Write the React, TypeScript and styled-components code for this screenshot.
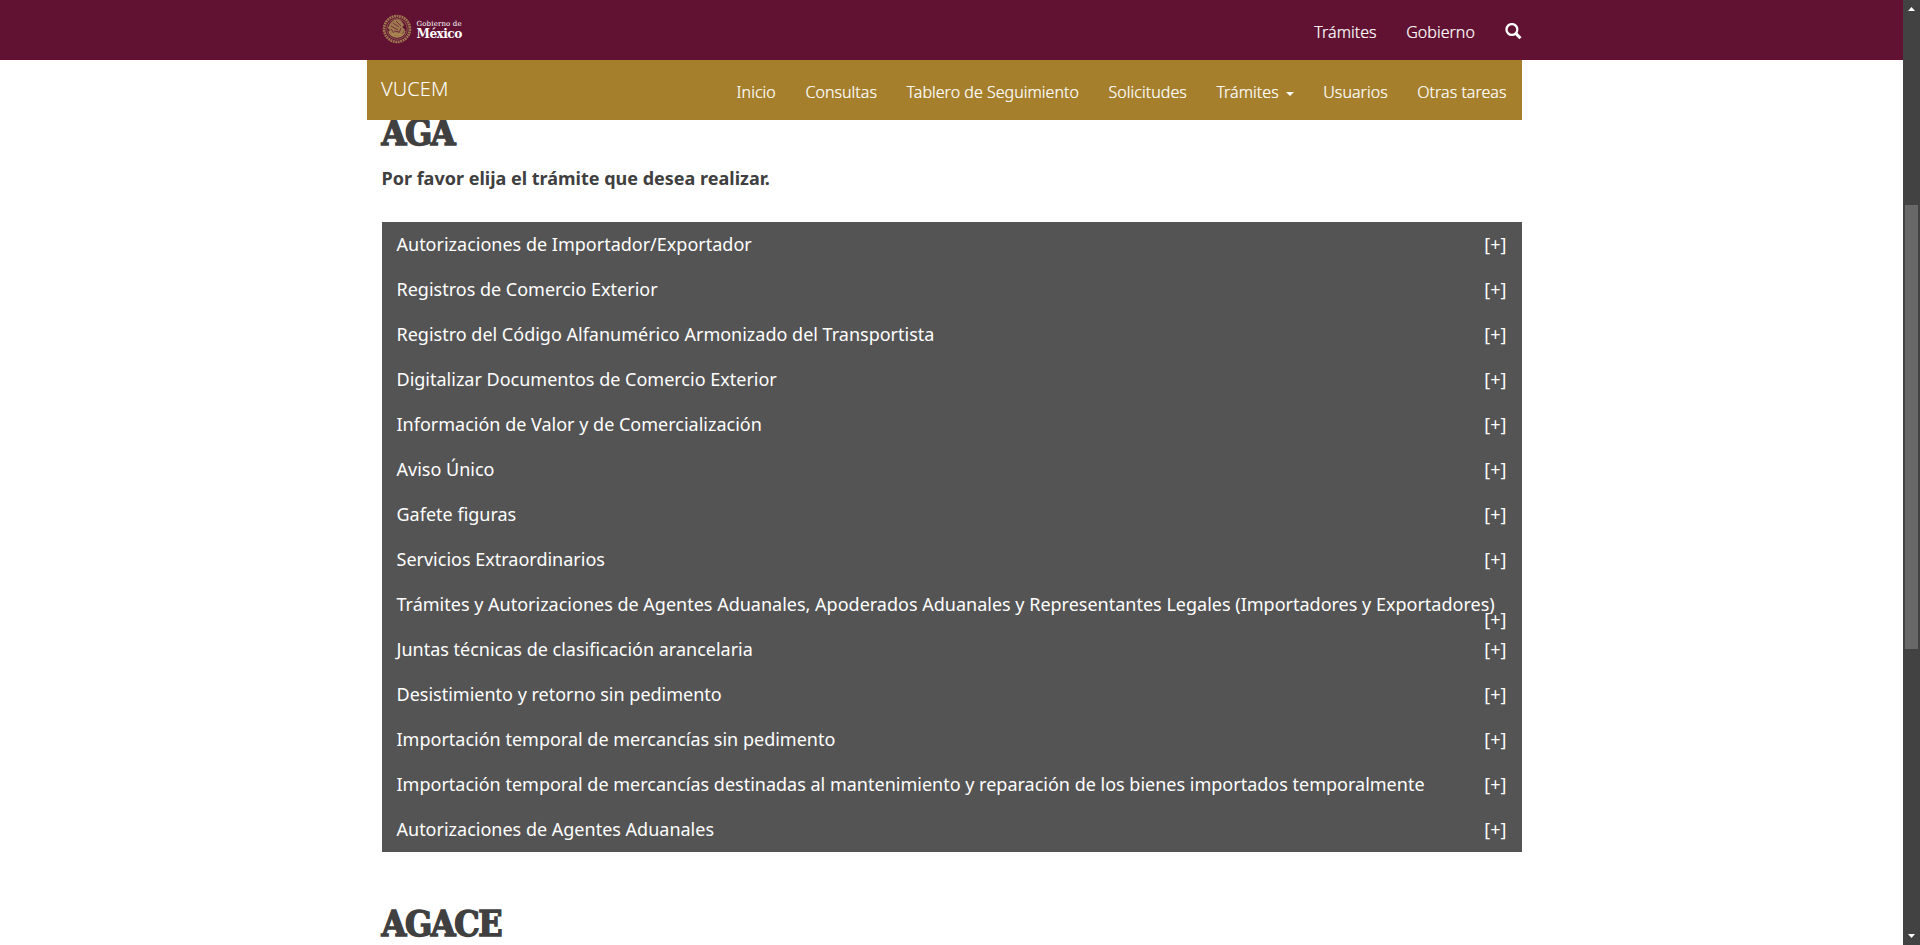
import React from 'react';
import styled, { createGlobalStyle } from 'styled-components';

const GlobalStyle = createGlobalStyle`
  * { box-sizing: border-box; }
  html, body { margin: 0; height: 945px; overflow: hidden; background: #fff; }
  body { font-family: "Noto Sans", "Open Sans", sans-serif; color: #404041; }
  h1, p, ul { margin: 0; padding: 0; }
  ul { list-style: none; }
`;

const Screen = styled.div`
  display: flex;
  width: 1920px;
  height: 945px;
  overflow: hidden;
`;

const Page = styled.div`
  width: 1903px;
  height: 945px;
  overflow: hidden;
`;

const GovBar = styled.header`
  height: 60px;
  background: #611232;
`;

const GovInner = styled.div`
  width: 1140px;
  height: 60px;
  margin: 0 auto;
  display: flex;
  justify-content: space-between;
`;

const Brand = styled.a`
  display: flex;
  align-items: flex-start;
  padding-top: 14px;
`;

const BrandText = styled.span`
  display: flex;
  flex-direction: column;
  margin: 6px 0 0 5px;
  font-family: "DejaVu Serif", serif;
  color: #fff;
`;

const BrandSmall = styled.span`
  font-size: 7px;
  line-height: 8px;
  letter-spacing: 0.15px;
`;

const BrandLarge = styled.span`
  font-family: "DejaVu Serif Condensed", "DejaVu Serif", serif;
  font-size: 13.5px;
  font-weight: 700;
  line-height: 11px;
  letter-spacing: -0.55px;
`;

const Links = styled.nav<{ $top: number }>`
  display: flex;
  align-items: flex-start;
  gap: 29.6px;
  padding-top: ${(p) => p.$top}px;
`;

const NavLink = styled.a`
  display: flex;
  align-items: center;
  color: #fff;
  font-size: 16px;
  font-weight: 300;
  line-height: 22px;
  letter-spacing: 0.03px;
  white-space: nowrap;
  -webkit-text-stroke: 0.2px #fff;
`;

const Caret = styled.span`
  margin: 3px 0 0 7px;
  border-top: 4px solid #fff;
  border-left: 4px solid transparent;
  border-right: 4px solid transparent;
`;

const SearchIcon = styled.svg`
  display: block;
  margin-top: 2px;
`;

const SiteBar = styled.div`
  position: relative;
  z-index: 1;
  display: flex;
  justify-content: space-between;
  width: 1155px;
  height: 60px;
  margin-left: 367px;
  padding: 0 15.5px 0 14px;
  background: #a57f2c;
`;

const SiteName = styled.a`
  padding-top: 15px;
  color: #fff;
  font-size: 20px;
  font-weight: 300;
  line-height: 28px;
  letter-spacing: 0.1px;
`;

const Content = styled.main`
  width: 1140px;
  margin: -18px 0 0 381.5px;
`;

const Heading = styled.h1`
  height: 60px;
  font-family: "DejaVu Serif Condensed", "DejaVu Serif", serif;
  font-size: 35.5px;
  font-weight: 700;
  line-height: 61px;
  letter-spacing: -1.4px;
  color: #404041;
  -webkit-text-stroke: 1.4px #404041;
`;

const Lead = styled.p`
  height: 31px;
  margin-bottom: 29px;
  padding-top: 1px;
  font-size: 18px;
  font-weight: 700;
  line-height: 30px;
`;

const Panel = styled.ul`
  height: 630px;
  margin-bottom: 41px;
  background: #545454;
`;

const Item = styled.li`
  height: 45px;
  padding: 14.5px 15px 0;
  color: #fff;
  font-size: 18px;
  line-height: 15px;
`;

const ItemTitle = styled.span`
  white-space: nowrap;
`;

const Toggle = styled.span`
  float: right;
`;

const Track = styled.div`
  display: flex;
  flex-direction: column;
  align-items: center;
  width: 17px;
  height: 945px;
  padding: 7px 0;
  background: #424242;
`;

const Thumb = styled.div`
  width: 13px;
  height: 444px;
  margin-top: 194px;
  margin-bottom: auto;
  background: #686868;
`;

const procedures = [
  'Autorizaciones de Importador/Exportador',
  'Registros de Comercio Exterior',
  'Registro del Código Alfanumérico Armonizado del Transportista',
  'Digitalizar Documentos de Comercio Exterior',
  'Información de Valor y de Comercialización',
  'Aviso Único',
  'Gafete figuras',
  'Servicios Extraordinarios',
  'Trámites y Autorizaciones de Agentes Aduanales, Apoderados Aduanales y Representantes Legales (Importadores y Exportadores)',
  'Juntas técnicas de clasificación arancelaria',
  'Desistimiento y retorno sin pedimento',
  'Importación temporal de mercancías sin pedimento',
  'Importación temporal de mercancías destinadas al mantenimiento y reparación de los bienes importados temporalmente',
  'Autorizaciones de Agentes Aduanales',
];

const menu = ['Inicio', 'Consultas', 'Tablero de Seguimiento', 'Solicitudes', 'Trámites', 'Usuarios', 'Otras tareas'];

function Seal() {
  return (
    <svg width="30" height="30" viewBox="0 0 30 30" fill="none" stroke="#a98a55">
      <circle cx="15" cy="15" r="12.9" strokeWidth="2.8" strokeDasharray="1.8 .7" opacity=".85" />
      <circle cx="15" cy="15" r="10.3" strokeWidth=".6" />
      <path d="M8 10c2-4 8-6 11-3l3 4-2 2 3 3-2 2-1 3-4 2-5-1-4-3 1-3-2-2z" fill="#a98a55" strokeWidth=".5" opacity=".85" />
      <path d="M7 17c1 4 4 6 8 6s7-2 8-6M10 20l10 1M13 17l-3 5M17 18l2 4" strokeWidth="1.3" />
      <path d="M11 9l6 4M9 12l7 4M14 7l5 5M12 17l5 1M9 15l3 4M19 14l-2 5" stroke="#611232" strokeWidth=".7" />
    </svg>
  );
}

export default function App() {
  return (
    <>
      <GlobalStyle />
      <Screen>
        <Page>
          <GovBar>
            <GovInner>
              <Brand>
                <Seal />
                <BrandText>
                  <BrandSmall>Gobierno de</BrandSmall>
                  <BrandLarge>México</BrandLarge>
                </BrandText>
              </Brand>
              <Links $top={21}>
                <NavLink>Trámites</NavLink>
                <NavLink>Gobierno</NavLink>
                <SearchIcon width="17" height="17" viewBox="0 0 17 17" fill="none" stroke="#fff">
                  <circle cx="6.9" cy="6.5" r="5.4" strokeWidth="2.3" />
                  <path d="M10.8 10.4l4.7 4.8" strokeWidth="3" />
                </SearchIcon>
              </Links>
            </GovInner>
          </GovBar>
          <SiteBar>
            <SiteName>VUCEM</SiteName>
            <Links $top={21}>
              {menu.map((label) => (
                <NavLink key={label}>
                  {label}
                  {label === 'Trámites' && <Caret />}
                </NavLink>
              ))}
            </Links>
          </SiteBar>
          <Content>
            <Heading>AGA</Heading>
            <Lead>Por favor elija el trámite que desea realizar.</Lead>
            <Panel>
              {procedures.map((title) => (
                <Item key={title}>
                  <ItemTitle>{title}</ItemTitle>
                  <Toggle>[+]</Toggle>
                </Item>
              ))}
            </Panel>
            <Heading>AGACE</Heading>
          </Content>
        </Page>
        <Track>
          <svg width="7" height="4" viewBox="0 0 7 4" fill="#fff"><path d="M3.5 0L7 4H0z" /></svg>
          <Thumb />
          <svg width="7" height="4" viewBox="0 0 7 4" fill="#fff"><path d="M0 0h7L3.5 4z" /></svg>
        </Track>
      </Screen>
    </>
  );
}
